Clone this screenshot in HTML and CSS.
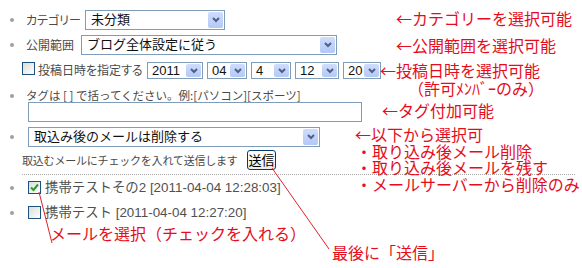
FILE: index.html
```html
<!DOCTYPE html>
<html lang="ja">
<head>
<meta charset="utf-8">
<link rel="stylesheet" href="styles.css">
</head>
<body>
<div class="page">
  <div class="form">
    <div class="row r1 dot">
      <span class="lbl w59">カテゴリー</span>
      <div class="sel" style="width:140px"><span class="val">未分類</span><span class="arr"><svg width="8" height="6" viewBox="0 0 8 6"><polyline points="1,1 4,4 7,1" fill="none" stroke="#4d6185" stroke-width="2"/></svg></span></div>
    </div>
    <div class="row r2 dot">
      <span class="lbl w55">公開範囲</span>
      <div class="sel" style="width:256px"><span class="val">ブログ全体設定に従う</span><span class="arr"><svg width="8" height="6" viewBox="0 0 8 6"><polyline points="1,1 4,4 7,1" fill="none" stroke="#4d6185" stroke-width="2"/></svg></span></div>
    </div>
    <div class="row r3">
      <span class="cb"></span>
      <span class="lbl w109">投稿日時を指定する</span>
      <div class="dates">
        <div class="sel sm" style="width:56px"><span class="val">2011</span><span class="arr"><svg width="8" height="6" viewBox="0 0 8 6"><polyline points="1,1 4,4 7,1" fill="none" stroke="#4d6185" stroke-width="2"/></svg></span></div>
        <div class="sel sm" style="width:40px"><span class="val">04</span><span class="arr"><svg width="8" height="6" viewBox="0 0 8 6"><polyline points="1,1 4,4 7,1" fill="none" stroke="#4d6185" stroke-width="2"/></svg></span></div>
        <div class="sel sm" style="width:40px"><span class="val">4</span><span class="arr"><svg width="8" height="6" viewBox="0 0 8 6"><polyline points="1,1 4,4 7,1" fill="none" stroke="#4d6185" stroke-width="2"/></svg></span></div>
        <div class="sel sm" style="width:44px"><span class="val">12</span><span class="arr"><svg width="8" height="6" viewBox="0 0 8 6"><polyline points="1,1 4,4 7,1" fill="none" stroke="#4d6185" stroke-width="2"/></svg></span></div>
        <div class="sel sm" style="width:38px"><span class="val">20</span><span class="arr"><svg width="8" height="6" viewBox="0 0 8 6"><polyline points="1,1 4,4 7,1" fill="none" stroke="#4d6185" stroke-width="2"/></svg></span></div>
      </div>
    </div>
    <div class="row r4 dot">
      <span class="lbl tag">タグは [ ] で括ってください。例:[パソコン][スポーツ]</span>
    </div>
    <div class="row r4b">
      <div class="inp"></div>
    </div>
    <div class="row r5 dot">
      <div class="sel" style="width:292px"><span class="val">取込み後のメールは削除する</span><span class="arr"><svg width="8" height="6" viewBox="0 0 8 6"><polyline points="1,1 4,4 7,1" fill="none" stroke="#4d6185" stroke-width="2"/></svg></span></div>
    </div>
    <div class="row r6">
      <span class="lbl">取込むメールにチェックを入れて送信します</span>
      <button class="btn">送信</button>
    </div>
    <div class="mails">
      <div class="row mail dot">
        <span class="cb on"><svg width="11" height="11" viewBox="0 0 11 11"><polyline points="2,5.5 4.5,8 9,2.5" fill="none" stroke="#21a121" stroke-width="2"/></svg></span>
        <span class="lbl">携帯テストその2 [2011-04-04 12:28:03]</span>
      </div>
      <div class="row mail dot">
        <span class="cb"></span>
        <span class="lbl">携帯テスト [2011-04-04 12:27:20]</span>
      </div>
    </div>
  </div>

  <svg class="lines" width="582" height="268" viewBox="0 0 582 268">
    <line x1="39" y1="192" x2="52" y2="243" stroke="#e0202a" stroke-width="1"/>
    <line x1="272" y1="168" x2="329" y2="249" stroke="#e0202a" stroke-width="1"/>
  </svg>

  <div class="note n1">←カテゴリーを選択可能</div>
  <div class="note n2">←公開範囲を選択可能</div>
  <div class="note n3">←投稿日時を選択可能</div>
  <div class="note n3b">（許可ﾒﾝﾊﾞｰのみ）</div>
  <div class="note n4">←タグ付加可能</div>
  <div class="note n5a">←以下から選択可</div>
  <div class="note n5b">・取り込み後メール削除</div>
  <div class="note n5c">・取り込み後メールを残す</div>
  <div class="note n5d">・メールサーバーから削除のみ</div>
  <div class="note n6">メールを選択（チェックを入れる）</div>
  <div class="note n7">最後に「送信」</div>
</div>
</body>
</html>
```

FILE: styles.css
```css
html, body {
  margin: 0;
  padding: 0;
  background: #fff;
}
body {
  font-family: "Noto Sans CJK JP", "Liberation Sans", sans-serif;
  width: 582px;
  height: 268px;
  overflow: hidden;
}
.page {
  position: relative;
  width: 582px;
  height: 268px;
}
.form {
  display: flex;
  flex-direction: column;
  padding-top: 10px;
}
.row {
  display: flex;
  align-items: center;
}
.dot::before {
  content: "";
  width: 4px;
  height: 4px;
  border-radius: 50%;
  background: #a0a0a0;
  margin-left: 10px;
  margin-right: 12px;
  flex: none;
}
.lbl {
  font-size: 12px;
  color: #4a4a4a;
  white-space: nowrap;
  font-feature-settings: "palt";
  line-height: 14px;
  flex: none;
}
.w59 { width: 59px; }
.w55 { width: 55px; }
.w109 { width: 109px; }

.r1 { height: 20px; }
.r2 { height: 20px; margin-top: 5px; }
.r3 { height: 17px; margin-top: 7px; padding-left: 22px; align-items: flex-start; }
.r3 .lbl { line-height: 16px; }
.r4 { height: 13px; margin-top: 10px; }
.r4 .lbl { line-height: 13px; }
.lbl.tag { font-feature-settings: normal; font-size: 11.5px; }
.r4b { height: 20px; padding-left: 28px; }
.r5 { height: 20px; margin-top: 5px; }
.r5::before { margin-right: 14px; }
.r6 { height: 20px; margin-top: 3px; padding-left: 22px; }
.r6 .lbl { font-size: 11px; width: 225px; font-feature-settings: normal; letter-spacing: -0.2px; }

.sel {
  display: flex;
  box-sizing: border-box;
  height: 20px;
  border: 1px solid #7f9db9;
  background: #fff;
  flex: none;
}
.sel .val {
  flex: 1;
  padding-left: 5px;
  font-size: 13px;
  line-height: 18px;
  color: #111;
  white-space: nowrap;
  overflow: hidden;
  font-family: "Liberation Sans", "Noto Sans CJK JP", sans-serif;
}
.sel .arr {
  width: 15px;
  margin: 1px;
  border-radius: 2px;
  background: linear-gradient(#cfdcfd, #b4c8f6);
  display: flex;
  align-items: center;
  justify-content: center;
}
.sel.sm { height: 17px; }
.sel.sm .val { line-height: 15px; padding-left: 4px; font-size: 13px; }
.dates {
  display: flex;
  gap: 4px;
}

.cb {
  box-sizing: border-box;
  width: 13px;
  height: 13px;
  border: 1px solid #1c5180;
  background: linear-gradient(135deg, #dcdcd7, #fff);
  margin-right: 3px;
  flex: none;
  display: flex;
  align-items: center;
  justify-content: center;
}
.inp {
  box-sizing: border-box;
  width: 334px;
  height: 20px;
  border: 1px solid #7f9db9;
  background: #fff;
}
.btn {
  box-sizing: border-box;
  width: 29px;
  height: 20px;
  padding: 0;
  margin: 0;
  border: 1px solid #003c74;
  border-radius: 3px;
  background: linear-gradient(#ffffff, #ecebe6);
  font-family: "Noto Sans CJK JP", sans-serif;
  font-size: 13px;
  line-height: 18px;
  color: #000;
}

.mails {
  margin-top: 4px;
  margin-left: 22px;
  margin-right: 7px;
  border-top: 1px dotted #a8a8a8;
}
.mail {
  height: 25px;
  margin-left: -22px;
}
.mail::before { margin-right: 14px; }
.mail .cb { margin-right: 4px; margin-top: -1px; }
.mail .lbl { font-family: "Liberation Sans", "Noto Sans CJK JP", sans-serif; font-size: 13.4px; font-feature-settings: normal; color: #505050; }

.lines {
  position: absolute;
  left: 0;
  top: 0;
  pointer-events: none;
}
.note {
  position: absolute;
  font-size: 16px;
  line-height: 18px;
  color: #e60c1c;
  white-space: nowrap;
  font-family: "Noto Sans CJK JP", sans-serif;
}
.n1 { left: 396px; top: 9px; }
.n2 { left: 396px; top: 36px; }
.n3 { left: 380px; top: 61px; }
.n3b { left: 408px; top: 79px; }
.n4 { left: 382px; top: 101px; }
.n5a, .n5b, .n5c, .n5d { line-height: 16px; }
.n5a { left: 355px; top: 126px; }
.n5b { left: 356px; top: 143px; }
.n5c { left: 356px; top: 159px; }
.n5d { left: 356px; top: 176px; }
.n6 { left: 50px; top: 224px; }
.n7 { left: 332px; top: 243px; }
```
